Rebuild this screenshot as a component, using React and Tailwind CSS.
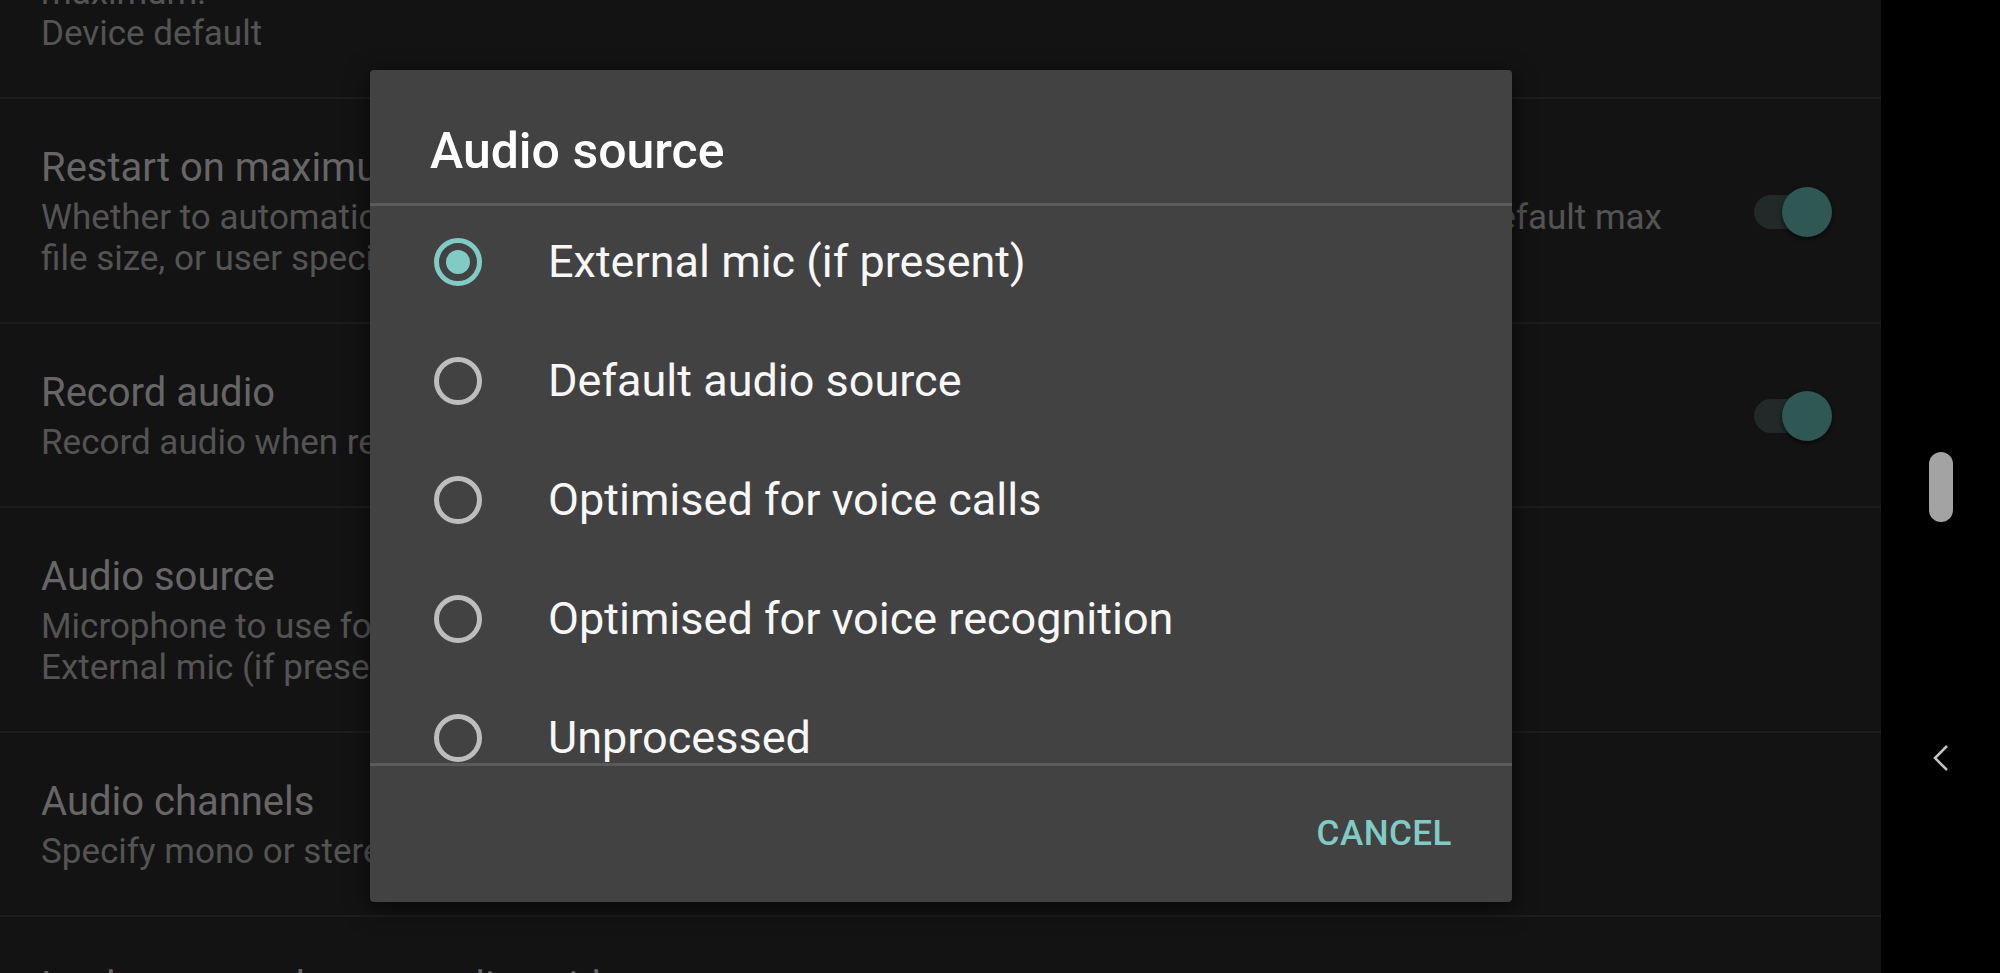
const options = [
  "External mic (if present)",
  "Default audio source",
  "Optimised for voice calls",
  "Optimised for voice recognition",
  "Unprocessed",
];

function Toggle() {
  return (
    <div className="relative h-[50px] w-[78px] shrink-0">
      <div className="absolute left-0 top-[8px] h-[34px] w-[68px] rounded-full bg-[#212a29]" />
      <div className="absolute right-0 top-0 h-[50px] w-[50px] rounded-full bg-[#2f5854] shadow-[0_2px_4px_rgba(0,0,0,0.6)]" />
    </div>
  );
}

function Row({ title, lines, toggle, children }) {
  return (
    <div className="border-b-2 border-[#1d1d1d]">
      <div className="flex items-center pb-[43px] pl-[41px] pr-[49px] pt-[45px]">
        <div className="flex-1">
          <div className="text-[40px] leading-[48px] text-[#666666]">{title}</div>
          <div className="mt-[5px] text-[35px] leading-[41px] text-[#545454]">
            {children ||
              lines.map((line) => (
                <div key={line} className="whitespace-nowrap">
                  {line}
                </div>
              ))}
          </div>
        </div>
        {toggle && <Toggle />}
      </div>
    </div>
  );
}

function Radio({ checked }) {
  return (
    <div
      className={`flex h-[48px] w-[48px] shrink-0 items-center justify-center rounded-full border-[5px] ${
        checked ? "border-[#80cbc4]" : "border-[#bdbdbd]"
      }`}
    >
      {checked && <div className="h-[24px] w-[24px] rounded-full bg-[#80cbc4]" />}
    </div>
  );
}

export default function App() {
  return (
    <div className="relative flex h-[973px] w-[2000px] overflow-hidden bg-black font-[Roboto,sans-serif]">
      <div className="h-full w-[1881px] overflow-hidden bg-[#131313]">
        <div className="border-b-2 border-[#1d1d1d]">
          <div className="-mt-[28px] pb-[43px] pl-[41px] text-[35px] leading-[41px] text-[#545454]">
            <div>maximum:</div>
            <div>Device default</div>
          </div>
        </div>

        <Row title="Restart on maximum file size" toggle>
          <div className="flex w-[1621px] justify-between whitespace-nowrap">
            <span>Whether to automatically restart on reaching maximum file size</span>
            <span>(either the device default max</span>
          </div>
          <div className="whitespace-nowrap">file size, or user specified)</div>
        </Row>
        <Row title="Record audio" lines={["Record audio when recording video"]} toggle />
        <Row
          title="Audio source"
          lines={["Microphone to use for recording audio", "External mic (if present)"]}
        />
        <Row title="Audio channels" lines={["Specify mono or stereo audio recording"]} />
        <div className="pl-[41px] pt-[46px] text-[40px] leading-[48px] text-[#666666]">
          Lock screen when recording video
        </div>
      </div>

      <div className="flex h-full flex-1 flex-col items-center bg-black pt-[452px]">
        <div className="h-[70px] w-[24px] rounded-full bg-[#a3a3a3]" />
        <svg className="mt-[223px]" width="18" height="26" viewBox="0 0 18 26" fill="none">
          <polyline points="15,1 3,13 15,25" stroke="#c4c4c4" strokeWidth="2.5" />
        </svg>
      </div>

      <div className="absolute left-[370px] top-[70px] flex h-[832px] w-[1142px] flex-col rounded-[4px] bg-[#424242] shadow-[0_6px_24px_rgba(0,0,0,0.6)]">
        <div className="pb-[22px] pl-[60px] pt-[51px] text-[50px] font-medium leading-[60px] text-white">
          Audio source
        </div>
        <div className="h-[3px] bg-[#5a5a5a]" />
        <div className="h-[557px] overflow-hidden">
          <div className="-mt-[4px]">
            {options.map((opt, i) => (
              <div key={opt} className="flex h-[119px] items-center pl-[64px]">
                <Radio checked={i === 0} />
                <span className="ml-[66px] text-[45px] text-[#f7f7f7]">{opt}</span>
              </div>
            ))}
          </div>
        </div>
        <div className="h-[3px] bg-[#5a5a5a]" />
        <div className="flex flex-1 items-center justify-end pr-[60px]">
          <span className="text-[35px] font-medium tracking-[0.5px] text-[#80cbc4]">CANCEL</span>
        </div>
      </div>
    </div>
  );
}
